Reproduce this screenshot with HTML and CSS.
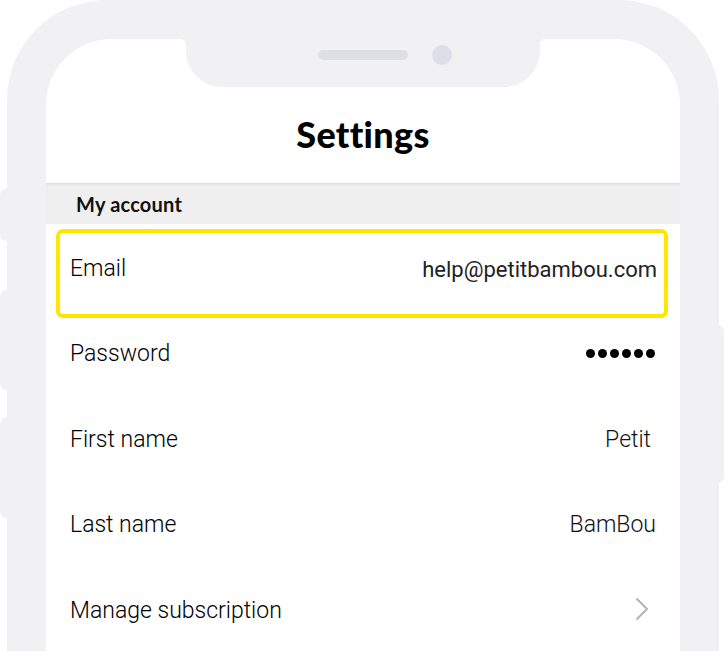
FILE: index.html
```html
<!DOCTYPE html>
<html lang="en">
<head>
<meta charset="utf-8">
<title>Settings</title>
<link rel="stylesheet" href="styles.css">
</head>
<body>
<div class="device">
  <span class="side-btn left b1"></span>
  <span class="side-btn left b2"></span>
  <span class="side-btn left b3"></span>
  <span class="side-btn right b4"></span>
  <div class="frame">
    <div class="screen">
      <header class="top">
        <div class="notch">
          <span class="speaker"></span>
          <span class="camera"></span>
        </div>
        <h1 class="title">Settings</h1>
      </header>
      <div class="section">My account</div>
      <ul class="rows">
        <li class="row highlighted">
          <span class="label">Email</span>
          <span class="value email">help@petitbambou.com</span>
        </li>
        <li class="row">
          <span class="label">Password</span>
          <span class="dots"><i></i><i></i><i></i><i></i><i></i><i></i></span>
        </li>
        <li class="row">
          <span class="label">First name</span>
          <span class="value petit">Petit</span>
        </li>
        <li class="row">
          <span class="label">Last name</span>
          <span class="value">BamBou</span>
        </li>
        <li class="row">
          <span class="label">Manage subscription</span>
          <svg class="chevron" width="14" height="24" viewBox="0 0 14 24"><path d="M1.5 1.5 L12 12 L1.5 22.5" fill="none" stroke="#b3b3b3" stroke-width="2"/></svg>
        </li>
      </ul>
    </div>
  </div>
</div>
</body>
</html>
```
FILE: styles.css
```css
html, body {
  margin: 0;
  padding: 0;
  background: #ffffff;
  height: 651px;
  overflow: hidden;
}

.device {
  position: relative;
  width: 726px;
  height: 651px;
  overflow: hidden;
}

.side-btn {
  position: absolute;
  background: #f1f1f3;
  width: 20px;
}
.side-btn.left { left: 0; border-radius: 7px 0 0 7px; }
.side-btn.right { right: 2px; border-radius: 0 7px 7px 0; }
.b1 { top: 188px; height: 53px; }
.b2 { top: 290px; height: 100px; }
.b3 { top: 417px; height: 101px; }
.b4 { top: 325px; height: 158px; }

.frame {
  position: relative;
  margin-left: 7px;
  width: 712px;
  height: 651px;
  box-sizing: border-box;
  padding: 39px 39px 0 39px;
  background: #f1f1f3;
  border-radius: 100px 100px 0 0;
}

.screen {
  position: relative;
  background: #ffffff;
  height: 612px;
  border-radius: 66px 66px 0 0;
  overflow: hidden;
}

.top {
  height: 144px;
  display: flex;
  flex-direction: column;
  align-items: center;
}

.notch {
  position: relative;
  width: 354px;
  height: 48px;
  flex: none;
  background: #f1f1f3;
  border-radius: 0 0 36px 36px;
  display: flex;
  align-items: center;
  box-sizing: border-box;
  padding: 0 0 16px 132px;
  gap: 24px;
}
.notch::before,
.notch::after {
  content: "";
  position: absolute;
  top: 0;
  width: 6px;
  height: 6px;
}
.notch::before {
  left: -6px;
  background: radial-gradient(circle at 0 100%, transparent 6px, #f1f1f3 6.5px);
}
.notch::after {
  right: -6px;
  background: radial-gradient(circle at 100% 100%, transparent 6px, #f1f1f3 6.5px);
}

.speaker {
  width: 90px;
  height: 10px;
  border-radius: 5px;
  background: #dedee7;
}
.camera {
  width: 20px;
  height: 20px;
  border-radius: 50%;
  background: #dedee7;
}

.title {
  margin: 0;
  flex: 1;
  display: flex;
  align-items: center;
  font-family: "Lato", sans-serif;
  font-weight: 900;
  font-size: 36px;
  color: #000;
  letter-spacing: 0.3px;
  padding-bottom: 2px;
}

.section {
  height: 41px;
  box-sizing: border-box;
  background: #efeff0;
  box-shadow: inset 0 3px 3px -2px rgba(0, 0, 0, 0.10);
  padding-left: 30px;
  display: flex;
  align-items: center;
  font-family: "Lato", sans-serif;
  font-weight: 700;
  font-size: 20px;
  letter-spacing: 0.2px;
  color: #111;
}

.rows {
  list-style: none;
  margin: 0;
  padding: 0;
  position: relative;
}

.row {
  position: relative;
  height: 85.5px;
  display: flex;
  align-items: center;
  justify-content: space-between;
  padding: 0 24px;
  font-family: "Roboto", sans-serif;
  font-weight: 300;
  font-size: 23px;
  color: #000;
}

.row.highlighted::after {
  content: "";
  position: absolute;
  left: 10px;
  right: 12px;
  top: 5px;
  height: 89px;
  box-sizing: border-box;
  border: 4px solid #ffe600;
  border-radius: 7px;
}

.label {
  margin-top: 3px;
}

.value {
  margin-top: 3px;
  color: #111;
}
.value.petit {
  margin-right: 5px;
}
.value.email {
  font-weight: 400;
  font-size: 22px;
  color: #222;
  margin-top: 6px;
  margin-right: -1px;
}

.dots {
  display: flex;
  gap: 3px;
  margin-right: 1px;
  margin-top: 2px;
}
.dots i {
  width: 9px;
  height: 9px;
  border-radius: 50%;
  background: #000;
}

.chevron {
  margin-right: 7px;
}
```
